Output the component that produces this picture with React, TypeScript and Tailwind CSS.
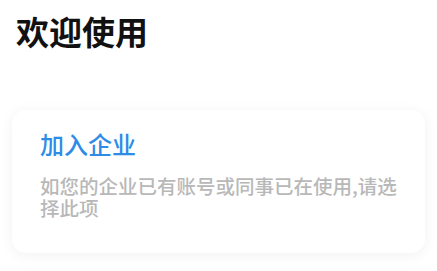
import React from 'react';

const App: React.FC = () => {
  return (
    <div className="w-[437px] h-[271px] bg-white font-['Noto_Sans_CJK_SC','Noto_Sans',sans-serif] overflow-hidden">
      <h1 className="pt-[14px] pl-4 text-[33px] leading-[34px] font-bold text-[#111111]">欢迎使用</h1>

      <div className="mx-3 mt-[62px] rounded-[14px] bg-white shadow-[0_2px_14px_rgba(0,0,0,0.06)] px-7 pt-[22px] pb-[34px]">
        <div className="text-[24px] leading-[24px] font-medium text-[#2e8be6]">加入企业</div>
        <p className="mt-[19px] text-[19.5px] leading-[22px] font-medium text-[#b8b8b8]">
          如您的企业已有账号或同事已在使用,请选择此项
        </p>
      </div>
    </div>
  );
};

export default App;
